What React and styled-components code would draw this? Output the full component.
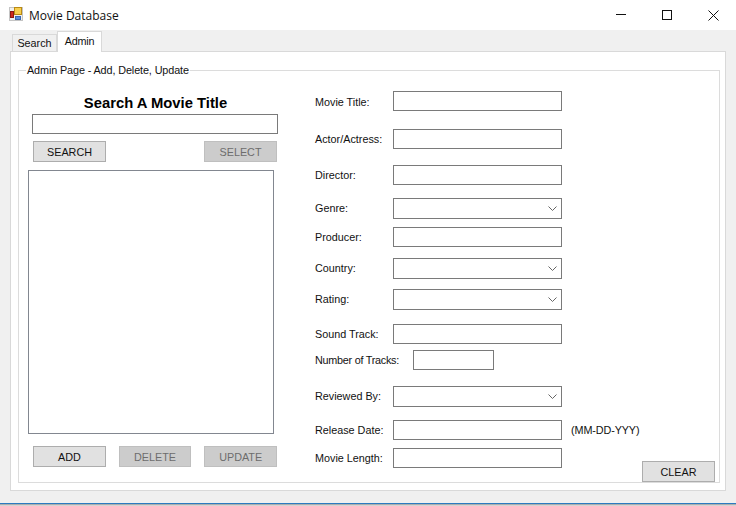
import React from 'react'
import styled, { createGlobalStyle } from 'styled-components';

const Global = createGlobalStyle`
html, body {
  margin: 0;
  padding: 0;
  background: #fff;
  overflow: hidden;
}
* { box-sizing: border-box; }
`;

const Window = styled.div`
width: 736px;
height: 506px;
display: flex;
flex-direction: column;
font-family: "Liberation Sans", Arial, sans-serif;
font-size: 10.8px;
color: #111;
background: #f0f0f0;
`;

const TitleBar = styled.div`
height: 30px;
flex: none;
display: flex;
align-items: center;
background: #fff;
padding-left: 9px;
`;

const LogoWrap = styled.div`
display: flex;
margin-top: -2px;
`;

const AppTitle = styled.div`
font-family: "Open Sans", sans-serif;
font-size: 12px;
margin-left: 6px;
color: #111;
flex: 1;
`;

const WinButton = styled.div`
width: 46px;
height: 30px;
display: flex;
align-items: center;
justify-content: center;
`;

const Body = styled.div`
flex: 1;
display: flex;
flex-direction: column;
padding: 1px 10px 0;
`;

const TabStrip = styled.div`
height: 21px;
flex: none;
display: flex;
align-items: flex-end;
padding-left: 2px;
margin-bottom: -1px;
position: relative;
z-index: 1;
`;

const Tab = styled.div`
width: ${({ $w }) => $w}px;
height: ${({ $active }) => ($active ? 21 : 18)}px;
padding-top: ${({ $active }) => ($active ? 3 : 2)}px;
text-align: center;
letter-spacing: ${({ $active }) => ($active ? '-0.2px' : '0')};
border: 1px solid #d9d9d9;
border-bottom: ${({ $active }) => ($active ? 'none' : '1px solid #d9d9d9')};
background: ${({ $active }) => ($active ? '#fff' : '#f0f0f0')};
`;

const TabPanel = styled.div`
width: 716px;
height: 440px;
flex: none;
background: #fff;
border: 1px solid #d9d9d9;
padding: 11px 5px 0 7px;
`;

const Group = styled.fieldset`
margin: 0;
width: 702px;
height: 420px;
padding: 0;
border: 1px solid #dcdcdc;
display: flex;
min-inline-size: 0;
`;

const Legend = styled.legend`
margin-left: 7px;
padding: 0 1px;
line-height: 14px;
letter-spacing: -0.1px;
`;

const LeftColumn = styled.div`
width: 260px;
flex: none;
margin-left: 9px;
display: flex;
flex-direction: column;
`;

const Heading = styled.div`
font-size: 14.8px;
font-weight: bold;
text-align: center;
margin-top: 18px;
margin-left: -5px;
line-height: 16px;
height: 16px;
color: #000;
`;

const SearchInput = styled.input`
display: block;
width: 246px;
height: 20px;
margin: 3px 0 0 4px;
border: 1px solid #7a7a7a;
background: #fff;
padding: 0 2px;
`;

const ButtonRow = styled.div`
display: flex;
justify-content: ${({ $spread }) => ($spread ? 'space-between' : 'flex-start')};
gap: ${({ $spread }) => ($spread ? 0 : 13)}px;
width: 244px;
margin: ${({ $top }) => $top}px 0 0 5px;
`;

const Button = styled.button`
width: 73px;
height: 21px;
padding: 0;
font: inherit;
color: ${({ disabled }) => (disabled ? '#6d6d6d' : '#111')};
background: ${({ disabled }) => (disabled ? '#cccccc' : '#e1e1e1')};
border: 1px solid ${({ disabled }) => (disabled ? '#bfbfbf' : '#adadad')};
`;

const ListBox = styled.div`
width: 246px;
height: 264px;
margin-top: 8px;
border: 1px solid #828790;
background: #fff;
`;

const Form = styled.div`
width: 323px;
flex: none;
margin-left: 27px;
padding-top: 14px;
`;

const Row = styled.div`
display: flex;
align-items: center;
height: ${({ $h }) => $h || 20}px;
margin-top: ${({ $top }) => $top || 0}px;
`;

const Label = styled.label`
width: ${({ $w }) => $w || 78}px;
flex: none;
white-space: nowrap;
letter-spacing: ${({ $tight }) => ($tight ? '-0.25px' : '0')};
padding-bottom: ${({ $lift }) => ($lift ? 2 : 0)}px;
padding-top: ${({ $drop }) => ($drop ? 2 : 0)}px;
`;

const TextInput = styled.input`
width: ${({ $w }) => $w || 169}px;
height: 20px;
flex: none;
border: 1px solid #7a7a7a;
background: #fff;
padding: 0 2px;
`;

const Combo = styled.div`
width: 169px;
height: 21px;
flex: none;
border: 1px solid #7a7a7a;
background: #fff;
display: flex;
align-items: center;
justify-content: flex-end;
padding-right: 4px;
`;

const Hint = styled.span`
margin-left: 9px;
white-space: nowrap;
letter-spacing: -0.1px;
`;

const ClearWrap = styled.div`
flex: 1;
display: flex;
align-items: flex-end;
justify-content: flex-end;
margin-right: 4px;
`;

const BottomEdge = styled.div`
height: 3px;
flex: none;
border-top: 1px solid #2b7bc0;
background: linear-gradient(#9a9a9a, #e8e8e8);
`;

const Logo = () => (
  <svg width="14" height="14" viewBox="0 0 14 14">
    <rect x="0.5" y="0.5" width="13" height="13" fill="#f0f0f0" stroke="#c4c4c4" />
    <rect x="5.5" y="0.5" width="7" height="7" fill="#f8cf4e" stroke="#b98a14" />
    <rect x="1.5" y="4.5" width="3" height="6" fill="#d0281e" stroke="#8a1a14" />
    <rect x="6.5" y="9.5" width="5" height="3" fill="#5a8fdc" stroke="#3c68b0" />
  </svg>
);

const Chevron = () => (
  <svg width="9" height="5" viewBox="0 0 9 5">
    <path d="M0.5 0.5 L4.5 4.5 L8.5 0.5" fill="none" stroke="#666" strokeWidth="1" />
  </svg>
);

const fields = [
  { label: 'Movie Title:', top: 0, drop: true },
  { label: 'Actor/Actress:', top: 18 },
  { label: 'Director:', top: 16 },
  { label: 'Genre:', top: 13, combo: true },
  { label: 'Producer:', top: 8 },
  { label: 'Country:', top: 11, combo: true },
  { label: 'Rating:', top: 10, combo: true },
  { label: 'Sound Track:', top: 14 },
  { label: 'Number of Tracks:', top: 6, labelW: 98, w: 81, tight: true },
  { label: 'Reviewed By:', top: 16, combo: true },
  { label: 'Release Date:', top: 13, hint: '(MM-DD-YYY)' },
  { label: 'Movie Length:', top: 8 },
];

const App = () => {
  return (
    <Window>
      <Global />
      <TitleBar>
        <LogoWrap><Logo /></LogoWrap>
        <AppTitle>Movie Database</AppTitle>
        <WinButton>
          <svg width="10" height="10" viewBox="0 0 10 10"><path d="M0 4.5H10" stroke="#111" /></svg>
        </WinButton>
        <WinButton>
          <svg width="10" height="10" viewBox="0 0 10 10"><rect x="0.5" y="0.5" width="9" height="9" fill="none" stroke="#111" /></svg>
        </WinButton>
        <WinButton>
          <svg width="11" height="11" viewBox="0 0 11 11"><path d="M0.5 0.5L10.5 10.5M10.5 0.5L0.5 10.5" stroke="#111" fill="none" /></svg>
        </WinButton>
      </TitleBar>
      <Body>
        <TabStrip>
          <Tab $w={45}>Search</Tab>
          <Tab $w={45} $active>Admin</Tab>
        </TabStrip>
        <TabPanel>
          <Group>
            <Legend>Admin Page - Add, Delete, Update</Legend>
            <LeftColumn>
              <Heading>Search A Movie Title</Heading>
              <SearchInput />
              <ButtonRow $spread $top={7}>
                <Button>SEARCH</Button>
                <Button disabled>SELECT</Button>
              </ButtonRow>
              <ListBox />
              <ButtonRow $top={12}>
                <Button>ADD</Button>
                <Button disabled>DELETE</Button>
                <Button disabled>UPDATE</Button>
              </ButtonRow>
            </LeftColumn>
            <Form>
              {fields.map((f) => (
                <Row key={f.label} $top={f.top} $h={f.combo ? 21 : 20}>
                  <Label $w={f.labelW} $tight={f.tight} $lift={f.combo} $drop={f.drop}>{f.label}</Label>
                  {f.combo ? <Combo><Chevron /></Combo> : <TextInput $w={f.w} />}
                  {f.hint && <Hint>{f.hint}</Hint>}
                </Row>
              ))}
            </Form>
            <ClearWrap>
              <Button>CLEAR</Button>
            </ClearWrap>
          </Group>
        </TabPanel>
      </Body>
      <BottomEdge />
    </Window>
  )
}

export default App
